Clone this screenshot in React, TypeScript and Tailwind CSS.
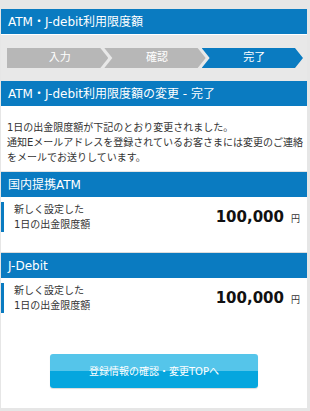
import React from "react";

const BLUE = "bg-[#0a7bc1]";

function Step({ label, active, first }: { label: string; active?: boolean; first?: boolean }) {
  return (
    <div
      className={
        "flex-1 h-[20px] flex items-center justify-center text-[11px] text-white " +
        (active ? "bg-[#0a7bc1] " : "bg-[#b7b7b7] ") +
        (first
          ? "[clip-path:polygon(0_0,calc(100%-8px)_0,100%_50%,calc(100%-8px)_100%,0_100%)]"
          : "-ml-[4px] [clip-path:polygon(0_0,calc(100%-8px)_0,100%_50%,calc(100%-8px)_100%,0_100%,8px_50%)]")
      }
    >
      <span className="pl-[4px]">{label}</span>
    </div>
  );
}

function Row() {
  return (
    <div className="bg-white flex items-center pt-[5px] pb-[20px] pr-[7px]">
      <div className="border-l-[3px] border-[#0a7bc1] pl-[10px] text-[10px] leading-[15px] text-[#333] flex-1">
        <div>新しく設定した</div>
        <div>1日の出金限度額</div>
      </div>
      <div className="flex items-baseline gap-[7px]">
        <span className="text-[15px] font-bold text-[#111]">100,000</span>
        <span className="text-[9px] text-[#333]">円</span>
      </div>
    </div>
  );
}

export default function App() {
  return (
    <div className="w-[310px] h-[411px] bg-[#e6e6e6] pt-[9px] pl-px pr-[3px] pb-[3px] font-['DejaVu_Sans','Noto_Sans_CJK_JP',sans-serif]">
      <div className="h-full flex flex-col bg-white">
        <div className={`${BLUE} h-[25px] flex items-center px-[7px] text-[12px] text-white`}>
          ATM・J-debit利用限度額
        </div>
        <div className="bg-[#e8e8e8] border-t border-white pt-[13px] pb-[13px] pl-[6px] pr-[4px] flex">
          <Step label="入力" first />
          <Step label="確認" />
          <Step label="完了" active />
        </div>
        <div className={`${BLUE} h-[25px] flex items-center px-[7px] text-[12px] text-white`}>
          ATM・J-debit利用限度額の変更 - 完了
        </div>
        <div className="bg-white pl-[6px] pr-0 pt-[14px] pb-[6px] text-[10px] leading-[15px] text-[#333] border-b border-[#e4e4e4] whitespace-nowrap overflow-hidden">
          <div>1日の出金限度額が下記のとおり変更されました。</div>
          <div>通知Eメールアドレスを登録されているお客さまには変更のご連絡</div>
          <div>をメールでお送りしています。</div>
        </div>
        <div className={`${BLUE} h-[25px] flex items-center px-[7px] text-[12px] text-white`}>
          国内提携ATM
        </div>
        <Row />
        <div className="h-px bg-[#dcdcdc]" />
        <div className={`${BLUE} h-[25px] flex items-center px-[7px] text-[12px] text-white`}>
          J-Debit
        </div>
        <Row />
        <div className="flex-1 bg-white flex justify-center pt-[21px]">
          <button className="w-[208px] h-[34px] rounded-[3px] bg-[linear-gradient(to_bottom,#55c5ea_0%,#55c5ea_50%,#06a6de_50%,#06a6de_100%)] text-white text-[10px] shadow-[0_1px_1px_rgba(0,0,0,0.15)] font-['DejaVu_Sans','Noto_Sans_CJK_JP',sans-serif]">
            登録情報の確認・変更TOPへ
          </button>
        </div>
      </div>
    </div>
  );
}
